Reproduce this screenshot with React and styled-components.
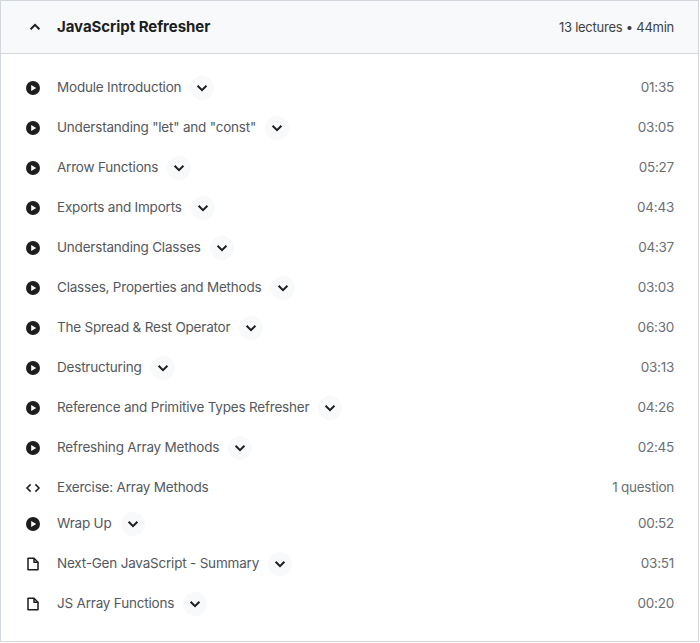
import React from 'react';
import styled, { createGlobalStyle } from 'styled-components';

const lectures = [
    { title: 'Module Introduction', time: '01:35', kind: 'play' },
    { title: 'Understanding "let" and "const"', time: '03:05', kind: 'play' },
    { title: 'Arrow Functions', time: '05:27', kind: 'play' },
    { title: 'Exports and Imports', time: '04:43', kind: 'play' },
    { title: 'Understanding Classes', time: '04:37', kind: 'play' },
    { title: 'Classes, Properties and Methods', time: '03:03', kind: 'play' },
    { title: 'The Spread & Rest Operator', time: '06:30', kind: 'play' },
    { title: 'Destructuring', time: '03:13', kind: 'play' },
    { title: 'Reference and Primitive Types Refresher', time: '04:26', kind: 'play' },
    { title: 'Refreshing Array Methods', time: '02:45', kind: 'play' },
    { title: 'Exercise: Array Methods', time: '1 question', kind: 'code' },
    { title: 'Wrap Up', time: '00:52', kind: 'play' },
    { title: 'Next-Gen JavaScript - Summary', time: '03:51', kind: 'file' },
    { title: 'JS Array Functions', time: '00:20', kind: 'file' },
];

const PlayIcon = () => (
    <svg width="16" height="16" viewBox="0 0 16 16">
        <circle cx="8" cy="8" r="7" fill="#1c1d1f" />
        <path d="M6.2 4.9v6.2L11.2 8z" fill="#fff" />
    </svg>
);

const CodeIcon = () => (
    <svg width="16" height="16" viewBox="0 0 16 16" fill="none" stroke="#1c1d1f" strokeWidth="1.5">
        <path d="M5.6 4.4 2 8l3.6 3.6M10.4 4.4 14 8l-3.6 3.6" />
    </svg>
);

const FileIcon = () => (
    <svg width="16" height="16" viewBox="0 0 16 16" fill="none" stroke="#1c1d1f" strokeWidth="1.5" strokeLinejoin="round">
        <path d="M3 2.2h6l4 4v7.6H3z" />
        <path d="M9 2.2v4h4" />
    </svg>
);

const Chevron = ({ up }) => (
    <svg width="12" height="12" viewBox="0 0 12 12" fill="none" stroke="#1c1d1f" strokeWidth="2">
        <path d={up ? 'M1.6 8.2 6 3.8l4.4 4.4' : 'M1.6 3.8 6 8.2l4.4-4.4'} />
    </svg>
);

const icons = { play: PlayIcon, code: CodeIcon, file: FileIcon };

const App = () => {
    return (
        <>
            <GlobalStyle />
            <Panel>
                <Header>
                    <HeaderLeft>
                        <HeaderIcon><Chevron up /></HeaderIcon>
                        <Title>JavaScript Refresher</Title>
                    </HeaderLeft>
                    <Meta>13 lectures • 44min</Meta>
                </Header>
                <List>
                    {lectures.map((item) => {
                        const Icon = icons[item.kind];
                        const isCode = item.kind === 'code';
                        return (
                            <Row key={item.title} $compact={isCode}>
                                <IconSlot><Icon /></IconSlot>
                                <LectureTitle>{item.title}</LectureTitle>
                                {!isCode && <ExpandButton><Chevron /></ExpandButton>}
                                <Time>{item.time}</Time>
                            </Row>
                        );
                    })}
                </List>
            </Panel>
        </>
    );
};

const GlobalStyle = createGlobalStyle`
    body {
        margin: 0;
        background: #fff;
        font-family: "Inter", "Liberation Sans", sans-serif;
        color: #1c1d1f;
    }
`;

const Panel = styled.div`
    width: 699px;
    height: 642px;
    box-sizing: border-box;
    border: 1px solid #d1d7dc;
`;

const Header = styled.div`
    display: flex;
    align-items: center;
    justify-content: space-between;
    height: 53px;
    box-sizing: border-box;
    padding: 0 24px 0 0;
    background: #f7f9fa;
    border-bottom: 1px solid #d1d7dc;
`;

const HeaderLeft = styled.div`
    display: flex;
    align-items: center;
`;

const HeaderIcon = styled.span`
    display: flex;
    align-items: center;
    justify-content: center;
    width: 16px;
    margin-left: 26px;
    margin-right: 14px;
`;

const IconSlot = styled.span`
    display: flex;
    align-items: center;
    justify-content: center;
    width: 24px;
    margin: 1px 12px 0 20px;
    flex-shrink: 0;
`;

const Title = styled.h3`
    margin: 0;
    font-size: 15px;
    font-weight: 700;
    line-height: 20px;
    letter-spacing: -0.05px;
    color: #1c1d1f;
`;

const Meta = styled.span`
    font-size: 13px;
    line-height: 20px;
    letter-spacing: -0.25px;
    color: #3e4143;
`;

const List = styled.div`
    display: flex;
    flex-direction: column;
    padding-top: 13px;
`;

const Row = styled.div`
    display: flex;
    align-items: center;
    height: ${(p) => (p.$compact ? '36px' : '40px')};
    padding-right: 24px;
    padding-top: ${(p) => (p.$compact ? '4px' : '0')};
    box-sizing: border-box;
`;

const LectureTitle = styled.span`
    font-size: 13.5px;
    line-height: 20px;
    letter-spacing: -0.2px;
    color: #54585c;
`;

const ExpandButton = styled.span`
    display: flex;
    align-items: center;
    justify-content: center;
    width: 24px;
    height: 24px;
    margin: 1px 0 0 9px;
    border-radius: 50%;
    background: #f7f9fa;
`;

const Time = styled.span`
    margin-left: auto;
    font-size: 13.5px;
    line-height: 20px;
    letter-spacing: -0.25px;
    color: #6a6f73;
`;

export default App;
